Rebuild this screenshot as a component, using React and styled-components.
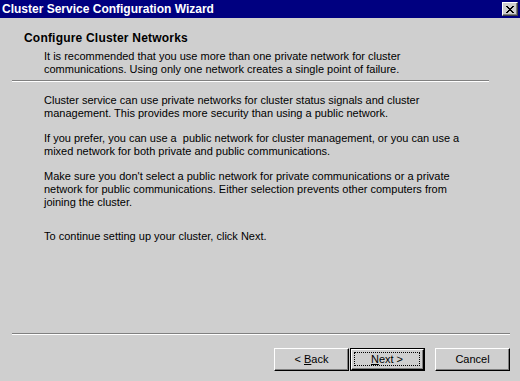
import styled, { createGlobalStyle } from 'styled-components';

const Global = createGlobalStyle`
  html, body {
    margin: 0;
    padding: 0;
    background: #cfcfcf;
  }
  * {
    box-sizing: border-box;
  }
`;

const Window = styled.div`
  width: 520px;
  height: 381px;
  background: #cfcfcf;
  display: flex;
  flex-direction: column;
  font-family: "Liberation Sans", Arial, sans-serif;
  font-size: 11px;
  color: #000;
  overflow: hidden;
`;

const TitleBar = styled.div`
  height: 18px;
  background: #000080;
  display: flex;
  align-items: center;
  justify-content: space-between;
  padding: 0 2px 0 2px;
`;

const Title = styled.span`
  color: #fff;
  font-weight: bold;
  font-size: 12px;
`;

const CloseButton = styled.div`
  width: 16px;
  height: 14px;
  background: #cfcfcf;
  border-top: 1px solid #fff;
  border-left: 1px solid #fff;
  border-right: 1px solid #404040;
  border-bottom: 1px solid #404040;
  box-shadow: inset -1px -1px 0 #808080;
  display: flex;
  align-items: center;
  justify-content: center;
`;

const Header = styled.div`
  padding: 14px 24px 0 24px;
  height: 62px;
`;

const Heading = styled.div`
  font-weight: bold;
  font-size: 12px;
  line-height: 13px;
  letter-spacing: 0.2px;
  margin-bottom: 5px;
`;

const Subtitle = styled.p`
  margin: 0 0 0 20px;
  line-height: 13px;
`;

const Separator = styled.div`
  margin-left: 12px;
  width: ${(p) => p.$width}px;
  height: 2px;
  border-top: 1px solid #808080;
  border-bottom: 1px solid #fff;
`;

const Body = styled.div`
  flex: 1;
  padding: 12px 24px 0 44px;
`;

const Para = styled.p`
  margin: 0 0 12px 0;
  line-height: 13px;
  &:last-child {
    margin-top: 21px;
  }
`;

const Footer = styled.div`
  height: 46px;
  padding: 13px 10px 0 0;
  display: flex;
  justify-content: flex-end;
  align-items: flex-start;
`;

const Button = styled.div`
  width: 75px;
  height: 23px;
  margin-left: ${(p) => p.$gap}px;
  display: flex;
  align-items: center;
  justify-content: center;
  background: #cfcfcf;
  border-top: 1px solid #fff;
  border-left: 1px solid #fff;
  border-right: 1px solid #000;
  border-bottom: 1px solid #000;
  box-shadow: inset -1px -1px 0 #808080;
  line-height: 13px;
`;

const DefaultButton = styled.div`
  width: 75px;
  height: 23px;
  margin-left: 1px;
  border: 1px solid #000;
  display: flex;
`;

const DefaultInner = styled.div`
  flex: 1;
  display: flex;
  align-items: center;
  justify-content: center;
  border-top: 1px solid #fff;
  border-left: 1px solid #fff;
  border-right: 1px solid #000;
  border-bottom: 1px solid #000;
  box-shadow: inset -1px -1px 0 #808080;
  padding: 2px 3px 3px 2px;
`;

const Focus = styled.div`
  width: 100%;
  height: 100%;
  border: 1px dotted #000;
  display: flex;
  align-items: center;
  justify-content: center;
  line-height: 13px;
`;

const Key = styled.span`
  text-decoration: underline;
`;

export default function App() {
  return (
    <>
      <Global />
      <Window>
        <TitleBar>
          <Title>Cluster Service Configuration Wizard</Title>
          <CloseButton>
            <svg width="8" height="7" viewBox="0 0 8 7">
              <path
                d="M0 0h2v1h1v1h2V1h1V0h2v1H7v1H6v1H5v1h1v1h1v1h1v1H6V6H5V5H3v1H2v1H0V6h1V5h1V4h1V3H2V2H1V1H0z"
                fill="#000"
              />
            </svg>
          </CloseButton>
        </TitleBar>
        <Header>
          <Heading>Configure Cluster Networks</Heading>
          <Subtitle>
            It is recommended that you use more than one private network for cluster
            <br />
            communications. Using only one network creates a single point of failure.
          </Subtitle>
        </Header>
        <Separator $width={477} />
        <Body>
          <Para>
            Cluster service can use private networks for cluster status signals and cluster
            <br />
            management. This provides more security than using a public network.
          </Para>
          <Para>
            If you prefer, you can use a&nbsp; public network for cluster management, or you can use a
            <br />
            mixed network for both private and public communications.
          </Para>
          <Para>
            Make sure you don't select a public network for private communications or a private
            <br />
            network for public communications. Either selection prevents other computers from
            <br />
            joining the cluster.
          </Para>
          <Para>To continue setting up your cluster, click Next.</Para>
        </Body>
        <Separator $width={498} />
        <Footer>
          <Button $gap={0}>
            &lt;&nbsp;<Key>B</Key>ack
          </Button>
          <DefaultButton>
            <DefaultInner>
              <Focus>
                <span>
                  <Key>N</Key>ext &gt;
                </span>
              </Focus>
            </DefaultInner>
          </DefaultButton>
          <Button $gap={10}>Cancel</Button>
        </Footer>
      </Window>
    </>
  );
}
